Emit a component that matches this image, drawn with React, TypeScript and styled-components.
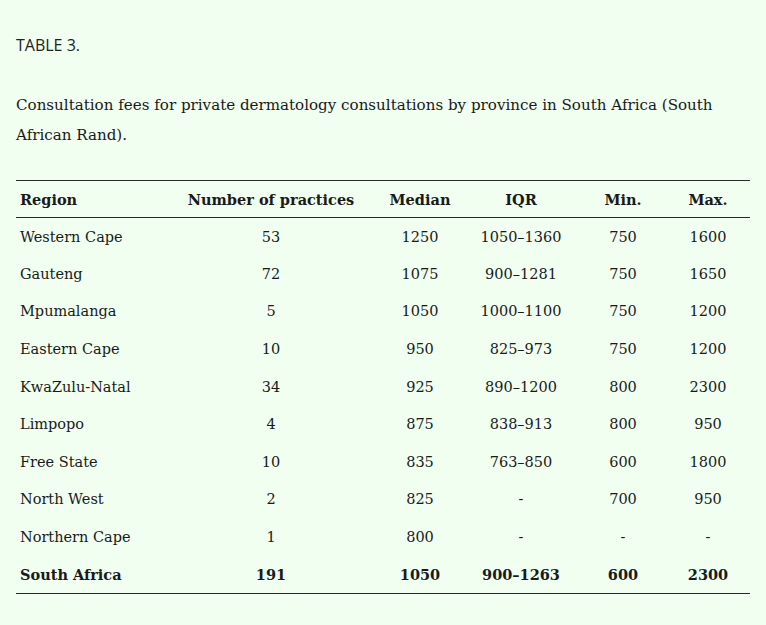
import React from 'react';
import styled, { createGlobalStyle } from 'styled-components';

const GlobalStyle = createGlobalStyle`
  body {
    margin: 0;
    background: #f0fff0;
    color: #1a1a1a;
    font-family: "DejaVu Serif", "Liberation Serif", serif;
  }
`;

const Page = styled.div`
  padding: 33px 16px 30px;
`;

const Label = styled.div`
  font-family: "Open Sans", "Noto Sans", sans-serif;
  font-size: 16px;
  line-height: 24px;
  color: #222;
`;

const Caption = styled.p`
  margin: 33px 0 0;
  font-size: 15.1px;
  line-height: 30px;
`;

const Table = styled.table`
  margin-top: 30px;
  width: 734px;
  border-collapse: collapse;
  table-layout: fixed;
  font-size: 14.5px;
  border-top: 1.5px solid #2a2a2a;
  border-bottom: 1.5px solid #2a2a2a;
`;

const HeadCell = styled.th<{ $w: number; $left?: boolean }>`
  box-sizing: border-box;
  width: ${(p) => p.$w}px;
  height: 37px;
  padding: 0 4px;
  text-align: ${(p) => (p.$left ? 'left' : 'center')};
  font-weight: 700;
  white-space: nowrap;
  border-bottom: 1.5px solid #2a2a2a;
`;

const Row = styled.tr<{ $total?: boolean }>`
  height: 37.6px;
  font-weight: ${(p) => (p.$total ? 700 : 400)};
`;

const Cell = styled.td<{ $left?: boolean }>`
  height: 37.6px;
  box-sizing: border-box;
  padding: 0 4px;
  text-align: ${(p) => (p.$left ? 'left' : 'center')};
  white-space: nowrap;
`;

const columns = [
  { title: 'Region', w: 148, left: true },
  { title: 'Number of practices', w: 214 },
  { title: 'Median', w: 84 },
  { title: 'IQR', w: 118 },
  { title: 'Min.', w: 86 },
  { title: 'Max.', w: 84 },
];

const rows = [
  ['Western Cape', '53', '1250', '1050–1360', '750', '1600'],
  ['Gauteng', '72', '1075', '900–1281', '750', '1650'],
  ['Mpumalanga', '5', '1050', '1000–1100', '750', '1200'],
  ['Eastern Cape', '10', '950', '825–973', '750', '1200'],
  ['KwaZulu-Natal', '34', '925', '890–1200', '800', '2300'],
  ['Limpopo', '4', '875', '838–913', '800', '950'],
  ['Free State', '10', '835', '763–850', '600', '1800'],
  ['North West', '2', '825', '-', '700', '950'],
  ['Northern Cape', '1', '800', '-', '-', '-'],
];

const total = ['South Africa', '191', '1050', '900–1263', '600', '2300'];

const App: React.FC = () => (
  <>
    <GlobalStyle />
    <Page>
      <Label>TABLE 3.</Label>
      <Caption>
        Consultation fees for private dermatology consultations by province in South Africa (South
        African Rand).
      </Caption>
      <Table>
        <thead>
          <tr>
            {columns.map((c) => (
              <HeadCell key={c.title} $w={c.w} $left={c.left}>
                {c.title}
              </HeadCell>
            ))}
          </tr>
        </thead>
        <tbody>
          {rows.map((r) => (
            <Row key={r[0]}>
              {r.map((v, i) => (
                <Cell key={i} $left={i === 0}>
                  {v}
                </Cell>
              ))}
            </Row>
          ))}
          <Row $total>
            {total.map((v, i) => (
              <Cell key={i} $left={i === 0}>
                {v}
              </Cell>
            ))}
          </Row>
        </tbody>
      </Table>
    </Page>
  </>
);

export default App;
